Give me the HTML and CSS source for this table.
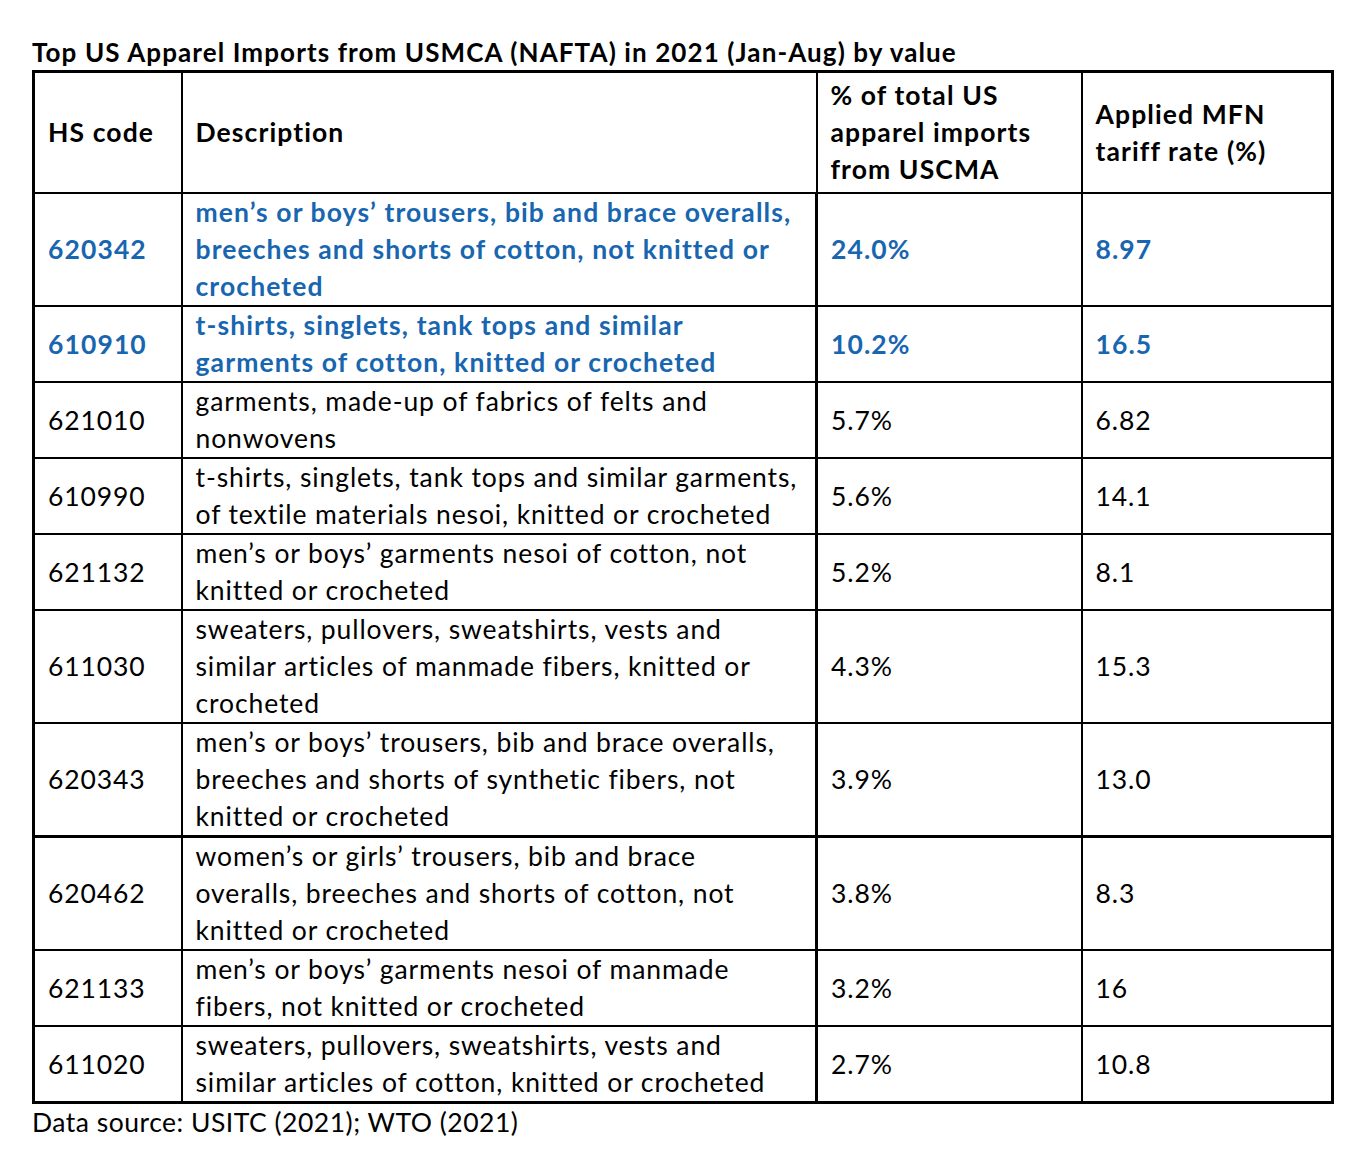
FILE: index.html
```html
<!DOCTYPE html>
<html lang="en">
<head>
<meta charset="utf-8">
<title>Top US Apparel Imports from USMCA</title>
<link rel="stylesheet" href="styles.css">
</head>
<body>
<div class="page">
  <h1 class="title">Top US Apparel Imports from USMCA (NAFTA) in 2021 (Jan-Aug) by value</h1>
  <table class="data">
    <colgroup>
      <col class="c1"><col class="c2"><col class="c3"><col class="c4">
    </colgroup>
    <thead>
      <tr>
        <th>HS code</th>
        <th>Description</th>
        <th>% of total US<br>apparel imports<br>from USCMA</th>
        <th>Applied MFN<br>tariff rate (%)</th>
      </tr>
    </thead>
    <tbody>
      <tr class="hl">
        <td>620342</td>
        <td>men’s or boys’ trousers, bib and brace overalls,<br>breeches and shorts of cotton, not knitted or<br>crocheted</td>
        <td>24.0%</td>
        <td>8.97</td>
      </tr>
      <tr class="hl">
        <td>610910</td>
        <td>t-shirts, singlets, tank tops and similar<br>garments of cotton, knitted or crocheted</td>
        <td>10.2%</td>
        <td>16.5</td>
      </tr>
      <tr>
        <td>621010</td>
        <td>garments, made-up of fabrics of felts and<br>nonwovens</td>
        <td>5.7%</td>
        <td>6.82</td>
      </tr>
      <tr>
        <td>610990</td>
        <td>t-shirts, singlets, tank tops and similar garments,<br>of textile materials nesoi, knitted or crocheted</td>
        <td>5.6%</td>
        <td>14.1</td>
      </tr>
      <tr>
        <td>621132</td>
        <td>men’s or boys’ garments nesoi of cotton, not<br>knitted or crocheted</td>
        <td>5.2%</td>
        <td>8.1</td>
      </tr>
      <tr>
        <td>611030</td>
        <td>sweaters, pullovers, sweatshirts, vests and<br>similar articles of manmade fibers, knitted or<br>crocheted</td>
        <td>4.3%</td>
        <td>15.3</td>
      </tr>
      <tr class="thick">
        <td>620343</td>
        <td>men’s or boys’ trousers, bib and brace overalls,<br>breeches and shorts of synthetic fibers, not<br>knitted or crocheted</td>
        <td>3.9%</td>
        <td>13.0</td>
      </tr>
      <tr>
        <td>620462</td>
        <td>women’s or girls’ trousers, bib and brace<br>overalls, breeches and shorts of cotton, not<br>knitted or crocheted</td>
        <td>3.8%</td>
        <td>8.3</td>
      </tr>
      <tr>
        <td>621133</td>
        <td>men’s or boys’ garments nesoi of manmade<br>fibers, not knitted or crocheted</td>
        <td>3.2%</td>
        <td>16</td>
      </tr>
      <tr>
        <td>611020</td>
        <td>sweaters, pullovers, sweatshirts, vests and<br>similar articles of cotton, knitted or crocheted</td>
        <td>2.7%</td>
        <td>10.8</td>
      </tr>
    </tbody>
  </table>
  <p class="source">Data source: USITC (2021); WTO (2021)</p>
</div>
</body>
</html>
```

FILE: styles.css
```css
html, body {
  margin: 0;
  padding: 0;
  background: #ffffff;
}

body {
  font-family: Lato, "Open Sans", "Liberation Sans", sans-serif;
  color: #000000;
}

.page {
  padding: 33px 0 0 32px;
  width: 1310px;
}

.title {
  margin: 0;
  font-size: 26px;
  font-weight: 700;
  letter-spacing: 1.1px;
  line-height: 38px;
  height: 37px;
  white-space: nowrap;
}

.data {
  border-collapse: collapse;
  width: 1299px;
  table-layout: fixed;
  font-size: 26.5px;
  line-height: 37px;
  letter-spacing: 0.9px;
  border: 3px solid #000;
}

.c1 { width: 148px; }
.c2 { width: 635px; }
.c3 { width: 265px; }
.c4 { width: 251px; }

.data th,
.data td {
  border: 2px solid #000;
  padding: 0 8px 0 13px;
  text-align: left;
  vertical-align: middle;
  white-space: nowrap;
}

.data th {
  font-weight: 700;
  letter-spacing: 1.1px;
  padding-top: 4px;
  padding-bottom: 4px;
}

.data td {
  font-weight: 400;
}

.data td:nth-child(3) {
  border-left-width: 3px;
}

.data tr.thick td {
  border-bottom-width: 3px;
}

.data tr.hl td {
  color: #1866b0;
  font-weight: 700;
  letter-spacing: 1.1px;
}

.source {
  margin: 0;
  font-size: 26.5px;
  letter-spacing: 0.5px;
  line-height: 37px;
}
```
